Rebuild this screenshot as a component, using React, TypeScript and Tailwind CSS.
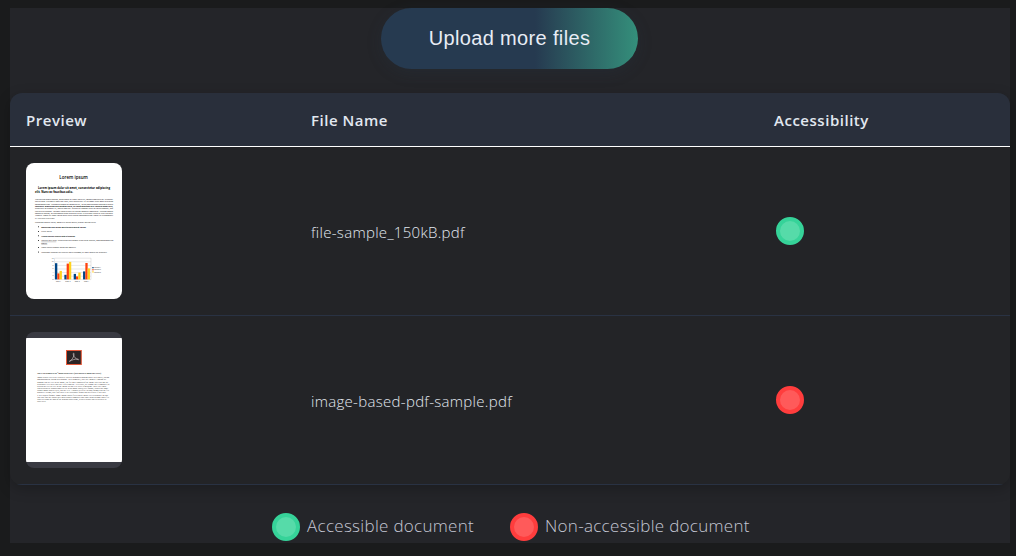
import React from "react";

const bodyOne = [
  "Vestibulum neque massa, scelerisque sit amet ligula eu, congue molestie mi. Praesent",
  "varius sem. Nullam at porttitor arcu, nec lacinia nisi. Ut ac dolor vitae odio interdum",
  "condimentum. Vivamus dapibus sodales ex, vitae malesuada ipsum cursus",
  "convallis. Maecenas sed egestas nulla, ac condimentum orci. Mauris diam felis,",
  "vulputate ac suscipit et, iaculis non est. Curabitur semper arcu ac ligula semper, nec",
  "luctus nisl blandit. Integer lacinia ante ac libero lobortis imperdiet. Nullam mollis",
  "convallis ipsum, ac accumsan nunc vehicula vitae. Nulla eget justo in felis tristique",
  "fringilla. Morbi sit amet tortor quis risus auctor condimentum. Morbi in ullamcorper",
  "elit. Nulla iaculis tellus sit amet.",
];

const bullets = [
  { y: 64.6, w: 45, bold: true, text: "Maecenas non lorem quis tellus placerat varius." },
  { y: 69.2, w: 11, bold: false, text: "Nulla facilisi." },
  { y: 73.6, w: 34, bold: true, text: "Aenean congue fringilla justo ut aliquam." },
  { y: 78.2, w: 72, bold: false, text: "Mauris id ex erat. Nunc vulputate neque vitae justo facilisis, non condimentum" },
  { y: 85.3, w: 35, bold: false, text: "Morbi viverra semper lorem nec molestie." },
  { y: 89.7, w: 66, bold: false, text: "Maecenas tincidunt est efficitur ligula euismod, sit amet ornare est vulputate." },
];

const groups = [
  [16.2, 6, 8.5],
  [4.6, 15.8, 17.5],
  [5.5, 3, 6.8],
  [8, 16.4, 11],
];
const barColors = ["#004586", "#ff420e", "#ffd320"];

function LoremThumb() {
  return (
    <svg className="block h-[136px] w-24 rounded-lg bg-white" viewBox="0 0 96 136" fontFamily="Open Sans, sans-serif" fill="#000">
      <text x="33.3" y="15.6" fontSize="5" fontWeight="600" textLength="28.5" lengthAdjust="spacingAndGlyphs">Lorem ipsum</text>
      <g fontSize="3.2" fontWeight="700">
        <text x="12" y="26.3" textLength="72" lengthAdjust="spacingAndGlyphs">Lorem ipsum dolor sit amet, consectetur adipiscing</text>
        <text x="9" y="29.9" textLength="38" lengthAdjust="spacingAndGlyphs">elit. Nunc ac faucibus odio.</text>
      </g>
      <g fontSize="2.1">
        {bodyOne.map((t, i) => (
          <text key={i} x="9" y={36.9 + i * 2.33} textLength={i === 8 ? 20 : 78} lengthAdjust="spacingAndGlyphs" fontWeight={i === 3 ? 700 : 400}>{t}</text>
        ))}
        <text x="9" y="60.2" textLength="61" lengthAdjust="spacingAndGlyphs">Maecenas mauris lectus, lobortis et purus mattis, blandit dictum tellus.</text>
        {bullets.map((b) => (
          <g key={b.y}>
            <circle cx="12.5" cy={b.y - 0.8} r="0.5" />
            <text x="15.3" y={b.y} textLength={b.w} lengthAdjust="spacingAndGlyphs" fontWeight={b.bold ? 700 : 400}>{b.text}</text>
          </g>
        ))}
        <text x="15.3" y="80.8" textLength="6" lengthAdjust="spacingAndGlyphs">sagittis.</text>
      </g>
      <path d="M15.3 78.8h15M15.3 81.3h6" stroke="#555" strokeWidth=".3" />
      <path d="M28.5 95.2h36.5M28.5 98.8h36.5M28.5 102.4h36.5M28.5 106h36.5M28.5 109.6h36.5M28.5 113.2h36.5M28.5 116.6h36.5M28.5 95v21.5M65 95v21.5" stroke="#bbb" strokeWidth=".35" fill="none" />
      {groups.map((g, i) =>
        g.map((h, j) => (
          <rect key={`${i}-${j}`} x={29 + i * 9.35 + j * 2.3} y={116.4 - h} width="2.3" height={h} fill={barColors[j]} />
        )),
      )}
      <g fontSize="1.7" fill="#333">
        {["12", "10", "8", "6", "4", "2", "0"].map((t, i) => (
          <text key={t} x="27.5" y={95.7 + i * 3.55} textAnchor="end">{t}</text>
        ))}
        {["Row 1", "Row 2", "Row 3", "Row 4"].map((t, i) => (
          <text key={t} x={30 + i * 9.35} y="119.2" textLength="5">{t}</text>
        ))}
        {["Column 1", "Column 2", "Column 3"].map((t, i) => (
          <g key={t}>
            <rect x="66.3" y={104 + i * 2.1} width="1.3" height="1.3" fill={barColors[i]} />
            <text x="68" y={105.3 + i * 2.1} textLength="7" lengthAdjust="spacingAndGlyphs">{t}</text>
          </g>
        ))}
      </g>
    </svg>
  );
}

const bodyTwo = [
  "Image-based PDFs are typically created through scanning paper in a copier, taking",
  "photographs or taking screenshots. To a computer, they are images. Though we",
  "humans can see text in the image, the file only consists of the image layer but not the",
  "searchable text layer that true PDFs contain. As a result, we cannot use a computer to",
  "search the text we see in the image as that text layer is missing. There are times",
  "when discovery productions will be in an image-based PDF format. When you come",
  "across image-based PDFs, ask the U.S. Attorney’s Office in what format was the file",
  "originally. Second, ask if they have it in a searchable format and specifically if they have",
  "it in a digital format. Some image-based files can be made text searchable so that",
  "you can find the words they hold using a computer and copy them to some other file",
  "while keeping the look of the original paper page, with its layout and its pictures in",
  "place as is.",
];

function ImagePdfThumb() {
  return (
    <svg className="block h-[136px] w-24 rounded-lg bg-[#393a42]" viewBox="0 0 96 136" fontFamily="Liberation Serif, serif" fill="#333">
      <rect y="6" width="96" height="124" fill="#fff" />
      <rect x="40.5" y="18.5" width="14.8" height="14" fill="#2c2526" stroke="#e5593a" strokeWidth="1" />
      <path d="M43.6 29.3C46 28.3 48.2 24.5 48 21.8c-.1-1.2-1.1-.6-.6 1 .6 2.2 2.4 4.1 4.6 4.9 1 .4.9-.7-.6-.7-2.6 0-5.2.9-7.6 2.1" fill="none" stroke="#bfb5b6" strokeWidth=".75" strokeLinecap="round" />
      <text x="11.2" y="42.3" fontSize="2.5" fontWeight="700" fill="#222" textLength="64" lengthAdjust="spacingAndGlyphs">This is an example of an “Image-based PDF” (also known as image-only PDFs)</text>
      <g fontSize="2.3">
        {bodyTwo.map((t, i) => (
          <text key={i} x="11.2" y={46.2 + i * 2.17} textLength={i === 11 ? 9 : [72, 69, 71][i % 3]} lengthAdjust="spacingAndGlyphs">{t}</text>
        ))}
      </g>
    </svg>
  );
}

function Status({ ok }: { ok: boolean }) {
  return (
    <span
      className={
        ok
          ? "block size-7 shrink-0 rounded-full border-4 border-[#36d399] bg-[#56dba9]"
          : "block size-7 shrink-0 rounded-full border-4 border-[#ff3d3d] bg-[#ff5a5a]"
      }
    />
  );
}

const files = [
  { name: "file-sample_150kB.pdf", ok: true, thumb: <LoremThumb /> },
  { name: "image-based-pdf-sample.pdf", ok: false, thumb: <ImagePdfThumb /> },
];

export default function App() {
  return (
    <div className="h-[556px] w-[1016px] overflow-hidden bg-[#1a1b1c] pt-2 pl-[10px] font-['Open_Sans',sans-serif] text-[#e2e8f0]">
      <main className="h-[535px] w-[1000px] bg-[#242529]">
        <div className="flex h-[85px] justify-center">
          <button className="mr-px h-[61px] w-[257px] rounded-full bg-[linear-gradient(90deg,#263a50_0%,#263a50_60%,#2a4d5a_69%,#348f7b_100%)] pb-px font-['Liberation_Sans',sans-serif] text-[20px] tracking-[0.35px] text-[#e8ecf5] shadow-[0_4px_15px_rgba(38,58,80,0.2)]">
            Upload more files
          </button>
        </div>
        <section className="h-[392px] overflow-hidden rounded-xl bg-[#232427] shadow-[0_4px_14px_rgba(0,0,0,0.22)]">
          <header className="grid h-[54px] grid-cols-[285px_463px_1fr] items-center border-b border-white bg-[#292f3b] px-4 pt-0.5 text-[15px] font-semibold tracking-[0.52px]">
            <span>Preview</span>
            <span>File Name</span>
            <span>Accessibility</span>
          </header>
          {files.map((f) => (
            <div key={f.name} className="grid h-[169px] grid-cols-[285px_463px_1fr] items-center border-b border-[#293243] px-4">
              {f.thumb}
              <span className="pt-0.5 text-[15px] font-light tracking-[0.3px] whitespace-nowrap">{f.name}</span>
              <span className="pl-0.5">
                <Status ok={f.ok} />
              </span>
            </div>
          ))}
        </section>
        <footer className="flex h-[58px] items-end pb-0.5 pl-[262px] text-[17px] font-light tracking-[0.3px] text-[#c4c7d4]">
          <div className="flex h-7 w-[238px] items-center gap-[7px]">
            <Status ok />
            <span className="pb-0.5 whitespace-nowrap">Accessible document</span>
          </div>
          <div className="flex h-7 items-center gap-[7px]">
            <Status ok={false} />
            <span className="pb-0.5 whitespace-nowrap">Non-accessible document</span>
          </div>
        </footer>
      </main>
    </div>
  );
}
